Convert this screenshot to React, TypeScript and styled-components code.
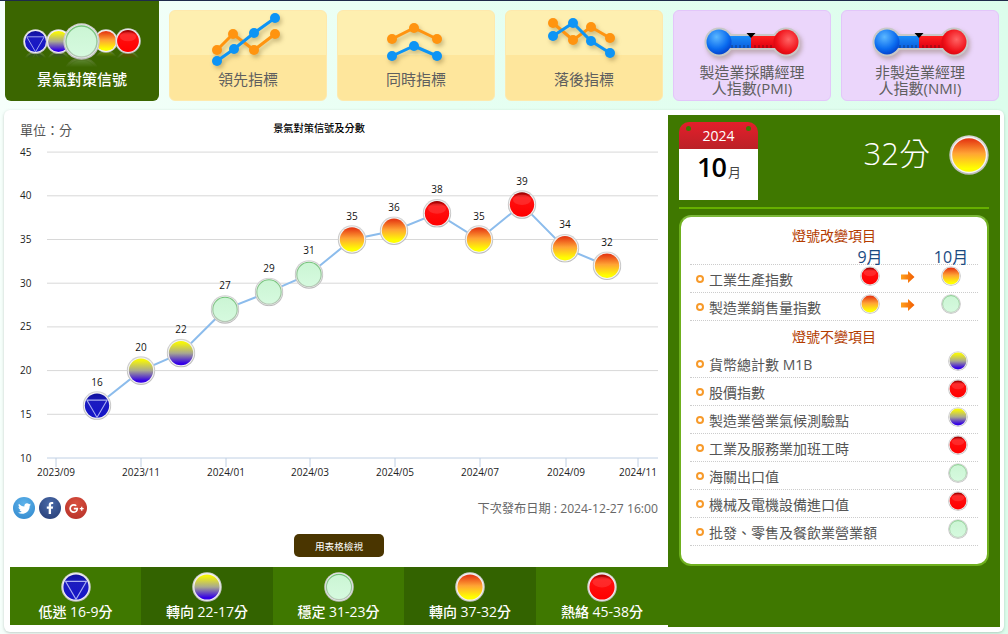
import { useId } from "react";
import styled, { createGlobalStyle } from "styled-components";
import { FaFacebookF, FaGooglePlusG, FaTwitter } from "react-icons/fa";

type LampKind = "low" | "coolTurn" | "stable" | "warmTurn" | "hot";

const FONT = `"Open Sans", "Noto Sans CJK TC", sans-serif`;

const GlobalStyle = createGlobalStyle`
  html, body {
    margin: 0;
    padding: 0;
    height: 100%;
    overflow: hidden;
  }
  body {
    font-family: ${FONT};
    background: linear-gradient(90deg, #f6fffb 0%, #e6fff2 45%, #dcfdec 100%);
  }
`;

const Page = styled.div`
  width: 1008px;
  height: 634px;
  box-sizing: border-box;
  border-top: 1px solid #1e2a4a;
`;

const Nav = styled.nav`
  display: flex;
  align-items: flex-end;
  gap: 10px;
  height: 100px;
  padding-left: 5px;
  margin-bottom: 9px;
`;

const ActiveTab = styled.div`
  width: 154px;
  height: 100px;
  display: flex;
  flex-direction: column;
  align-items: center;
  background: #3b6600;
  border-radius: 0 0 6px 6px;
  color: #fff;
  font-size: 15px;
  font-weight: 500;
  line-height: 18px;
  padding-bottom: 13px;
  box-sizing: border-box;
`;

const LampGroup = styled.div`
  display: flex;
  align-items: center;
  height: 38px;
  margin-top: 21px;
  margin-bottom: auto;
`;

const GroupLamp = styled.span<{ $top?: boolean; $gap: number }>`
  display: flex;
  margin-left: ${({ $gap }) => $gap}px;
  z-index: ${({ $top }) => ($top ? 2 : 1)};
  -webkit-box-reflect: below -3px linear-gradient(transparent 72%, rgba(255, 255, 255, 0.3));
`;

const Tab = styled.div<{ $variant: "amber" | "violet"; $twoLine?: boolean }>`
  width: 158px;
  height: 91px;
  display: flex;
  flex-direction: column;
  align-items: center;
  box-sizing: border-box;
  border-radius: 6px;
  color: #5f5f5f;
  font-size: 15px;
  line-height: 16px;
  text-align: center;
  padding-bottom: ${({ $twoLine }) => ($twoLine ? "4px" : "13px")};
  background: ${({ $variant }) =>
    $variant === "amber"
      ? "linear-gradient(180deg, #feefb0 0, #feefb0 49%, #fee69c 49%, #fee69c 100%)"
      : "#ebd6fb"};
  border: ${({ $variant }) =>
    $variant === "amber" ? "1px solid #fee9ad" : "1px solid #e3c6fa"};
`;

const TabIcon = styled.svg`
  display: block;
  flex: none;
  margin-bottom: auto;
  filter: drop-shadow(2px 3px 2px rgba(90, 70, 20, 0.3));
`;

const Card = styled.main`
  display: flex;
  width: 1000px;
  height: 522px;
  margin-left: 4px;
  box-sizing: border-box;
  padding: 5px 4px 5px 6px;
  background: #fff;
  border-radius: 6px;
  box-shadow: 0 1px 3px rgba(90, 110, 100, 0.35);
`;

const LeftColumn = styled.section`
  width: 658px;
  display: flex;
  flex-direction: column;
`;

const ChartSvg = styled.svg`
  display: block;
  width: 658px;
  height: 375px;
  font-family: ${FONT};
`;

const ToolRow = styled.div`
  display: flex;
  align-items: center;
  justify-content: space-between;
  height: 22px;
  margin-top: 7px;
  padding: 0 10px 0 3px;
`;

const Socials = styled.div`
  display: flex;
  gap: 4px;
`;

const SocialButton = styled.span<{ $color: string; $dark: string; $size: number }>`
  width: 22px;
  height: 22px;
  border-radius: 50%;
  display: flex;
  align-items: center;
  justify-content: center;
  color: #fff;
  font-size: ${({ $size }) => $size}px;
  background: radial-gradient(circle at 50% 30%, ${({ $color }) => $color}, ${({ $dark }) => $dark});
`;

const NextDate = styled.span`
  font-size: 12.2px;
  color: #666;
`;

const TableButton = styled.button`
  align-self: center;
  width: 90px;
  height: 23px;
  margin-top: 15px;
  padding: 0;
  border: 0;
  border-radius: 5px;
  background: #4a3500;
  color: #fff;
  font-family: ${FONT};
  font-size: 9.6px;
`;

const Legend = styled.div`
  display: grid;
  grid-template-columns: 131px 132px 131px 132px 132px;
  height: 58px;
  margin-top: auto;
  margin-bottom: 2px;
`;

const LegendCell = styled.div<{ $dark?: boolean }>`
  display: flex;
  flex-direction: column;
  align-items: center;
  padding-top: 5px;
  box-sizing: border-box;
  background: ${({ $dark }) => ($dark ? "#336300" : "#3f7800")};
  color: #fff;
  font-size: 14px;
  font-weight: 500;
  line-height: 19px;
`;

const Aside = styled.aside`
  width: 332px;
  box-sizing: border-box;
  padding: 7px 11px;
  background: #3f7800;
`;

const AsideHead = styled.div`
  display: flex;
  justify-content: space-between;
  height: 78px;
  margin-bottom: 7px;
`;

const Calendar = styled.div`
  position: relative;
  width: 79px;
  display: flex;
  flex-direction: column;
  text-align: center;
`;

const CalendarTop = styled.div`
  height: 27px;
  border-radius: 10px 10px 0 0;
  background: linear-gradient(180deg, #e41f2b, #bb2127);
  color: #fff;
  font-size: 14px;
  line-height: 27px;
`;

const CalendarHole = styled.i<{ $side: "left" | "right" }>`
  position: absolute;
  top: 4px;
  ${({ $side }) => $side}: 7px;
  width: 5px;
  height: 5px;
  border-radius: 50%;
  background: #3f7800;
`;

const CalendarMonth = styled.div`
  flex: 1;
  background: #fff;
  color: #000;
  font-size: 27px;
  font-weight: 600;
  line-height: 36px;
  letter-spacing: -1px;

  small {
    font-size: 13px;
    font-weight: 400;
    color: #444;
    margin-left: 2px;
  }
`;

const Score = styled.div`
  display: flex;
  align-items: center;
  gap: 19px;
  height: 40px;
  margin-top: 13px;
  color: #fff;
  font-size: 31px;
  font-weight: 300;
`;

const ScoreValue = styled.span`
  margin-bottom: 8px;
`;

const Divider = styled.hr`
  height: 2px;
  margin: 0 0 6px;
  border: 0;
  background: #66b000;
`;

const StatusBox = styled.div`
  height: 351px;
  box-sizing: border-box;
  padding: 9px 9px 0;
  background: #fff;
  border: 2px solid #6fb01e;
  border-top-color: #7cb83a;
  border-radius: 12px;
`;

const BoxTitle = styled.h3<{ $second?: boolean }>`
  margin: ${({ $second }) => ($second ? "6px 0 0" : "0")};
  height: ${({ $second }) => ($second ? "23px" : "20px")};
  color: #b33c00;
  font-size: 14px;
  font-weight: 400;
  line-height: 20px;
  text-align: center;
`;

const ChangeGrid = styled.div`
  display: grid;
  grid-template-columns: 160px 40px 36px 50px 2px;
  align-items: center;
  justify-items: center;
  height: 28px;
  box-sizing: border-box;
  border-bottom: 1px dotted #ccc;
`;

const MonthHead = styled(ChangeGrid)`
  height: 19px;
  padding-top: 2px;
  color: #1a4a82;
  font-size: 16px;
  line-height: 18px;
`;

const SteadyRow = styled.div`
  display: grid;
  grid-template-columns: 248px 40px;
  align-items: center;
  justify-items: center;
  height: 28px;
  box-sizing: border-box;
  border-bottom: 1px dotted #ccc;
`;

const ItemLabel = styled.span`
  justify-self: start;
  display: flex;
  align-items: center;
  gap: 5px;
  padding-left: 6px;
  color: #555;
  font-size: 14px;
  white-space: nowrap;

  &::before {
    content: "";
    width: 4px;
    height: 4px;
    border: 2.5px solid #f79a2a;
    border-radius: 50%;
  }
`;

// lamps in the status rows sit a little above the row's text
const RowLamp = styled.span`
  display: block;
  margin-bottom: 5px;
`;

const ArrowSvg = styled.svg`
  display: block;
  margin-bottom: 3px;
`;

const lampStops: Record<LampKind, [string, string][]> = {
  low: [["0", "#10109a"], ["0.35", "#1c1cc0"], ["1", "#1414c8"]],
  coolTurn: [["0.08", "#f4f40c"], ["0.5", "#a8a890"], ["0.92", "#3400e6"]],
  stable: [["0", "#cbf5d4"], ["1", "#d6fadf"]],
  warmTurn: [["0.05", "#e63c14"], ["0.45", "#ffa334"], ["0.9", "#ffff00"]],
  hot: [["0", "#8e0000"], ["0.22", "#ff1010"], ["1", "#ff0000"]],
};

// one lamp, used as a plain icon or nested inside the chart svg
const Lamp = ({ kind, size, x, y }: { kind: LampKind; size: number; x?: number; y?: number }) => {
  const id = useId().replace(/[^a-zA-Z0-9]/g, "");
  return (
    <svg x={x} y={y} width={size} height={size} viewBox="0 0 40 40" display="block">
      <defs>
        <linearGradient id={`${id}ring`} x1="0" y1="0" x2="0" y2="1">
          <stop offset="0" stopColor="#d4d4d4" />
          <stop offset="1" stopColor="#bcbcbc" />
        </linearGradient>
        <linearGradient id={`${id}edge`} x1="0" y1="0" x2="0" y2="1">
          <stop offset="0" stopColor="#74c47a" />
          <stop offset="1" stopColor="#b8c8b8" />
        </linearGradient>
        <linearGradient id={`${id}fill`} x1="0" y1="0" x2="0" y2="1">
          {lampStops[kind].map(([offset, color]) => (
            <stop key={offset} offset={offset} stopColor={color} />
          ))}
        </linearGradient>
      </defs>
      <circle cx="20" cy="20" r="19.7" fill={`url(#${id}ring)`} />
      <circle cx="20" cy="20" r="18.2" fill="#f4f4f4" />
      <circle
        cx="20"
        cy="20"
        r="16.8"
        fill={`url(#${id}fill)`}
        stroke={kind === "stable" ? `url(#${id}edge)` : "none"}
        strokeWidth="1.6"
      />
      {kind === "low" && (
        <path d="M6 12.5H34L20 36.5Z" fill="none" stroke="#a9aef2" strokeWidth="1.5" />
      )}
      {kind === "hot" && <ellipse cx="20" cy="13.5" rx="12.5" ry="7" fill="#ff6a6a" opacity="0.3" />}
    </svg>
  );
};

type Pt = [number, number];

const Polyline = ({ points, color }: { points: Pt[]; color: string }) => (
  <g>
    <polyline
      points={points.map((p) => p.join(",")).join(" ")}
      fill="none"
      stroke={color}
      strokeWidth="3"
    />
    {points.map(([cx, cy]) => (
      <circle key={`${cx}-${cy}`} cx={cx} cy={cy} r="5" fill={color} />
    ))}
  </g>
);

const LineIcon = ({ orange, blue }: { orange: Pt[]; blue: Pt[] }) => (
  <TabIcon width="80" height="60" viewBox="0 0 80 60">
    <Polyline points={orange} color="#ff9410" />
    <Polyline points={blue} color="#0d94f5" />
  </TabIcon>
);

const Thermometer = () => {
  const id = useId().replace(/[^a-zA-Z0-9]/g, "");
  return (
    <TabIcon width="96" height="53" viewBox="0 0 96 53">
      <defs>
        <linearGradient id={`${id}b`} x1="0" y1="0" x2="0" y2="1">
          <stop offset="0" stopColor="#1a8cf8" />
          <stop offset="1" stopColor="#0a60e0" />
        </linearGradient>
        <linearGradient id={`${id}r`} x1="0" y1="0" x2="0" y2="1">
          <stop offset="0" stopColor="#ff2020" />
          <stop offset="1" stopColor="#e00010" />
        </linearGradient>
        <radialGradient id={`${id}bb`} cx="0.4" cy="0.3" r="0.8">
          <stop offset="0" stopColor="#5cb8ff" />
          <stop offset="0.6" stopColor="#0a6cf0" />
          <stop offset="1" stopColor="#0034c0" />
        </radialGradient>
        <radialGradient id={`${id}rb`} cx="0.6" cy="0.4" r="0.8">
          <stop offset="0" stopColor="#ff6464" />
          <stop offset="0.6" stopColor="#f01018" />
          <stop offset="1" stopColor="#c00008" />
        </radialGradient>
      </defs>
      <circle cx="15" cy="31" r="14.5" fill="#c8c8c8" />
      <circle cx="82" cy="31" r="14.5" fill="#c8c8c8" />
      <rect x="15" y="23" width="67" height="16" fill="#c8c8c8" />
      <rect x="20" y="25" width="27" height="12" fill={`url(#${id}b)`} />
      <rect x="47" y="25" width="30" height="12" fill={`url(#${id}r)`} />
      <circle cx="15" cy="31" r="12.5" fill={`url(#${id}bb)`} />
      <circle cx="82" cy="31" r="12.5" fill={`url(#${id}rb)`} />
      <path
        d="M28 37v-3M32 37v-3M36 37v-3M40 37v-3M44 37v-3M51 37v-3M55 37v-3M59 37v-3M63 37v-3M67 37v-3"
        stroke="#111"
        strokeOpacity="0.65"
        strokeWidth="0.7"
      />
      <path d="M42.5 22H51.5L47 27Z" fill="#000" />
    </TabIcon>
  );
};

const ChangeArrow = () => {
  const id = useId().replace(/[^a-zA-Z0-9]/g, "");
  return (
    <ArrowSvg width="14" height="13" viewBox="0 0 14 13">
      <defs>
        <linearGradient id={id} x1="0" y1="0" x2="1" y2="0">
          <stop offset="0" stopColor="#ffa11e" />
          <stop offset="1" stopColor="#f25c00" />
        </linearGradient>
      </defs>
      <path d="M0 3.5H7V0L13.5 6L7 12V8.5H0Z" fill={`url(#${id})`} />
    </ArrowSvg>
  );
};

const gridLines = [45, 40, 35, 30, 25, 20, 15, 10];
const valueY = (v: number) => 343 - (v - 10) * 8.74;

const xTicks: [string, number][] = [
  ["2023/09", 46],
  ["2023/11", 131],
  ["2024/01", 216],
  ["2024/03", 300],
  ["2024/05", 385],
  ["2024/07", 470],
  ["2024/09", 556],
  ["2024/11", 628],
];

const points: { x: number; v: number; kind: LampKind }[] = [
  { x: 87, v: 16, kind: "low" },
  { x: 131, v: 20, kind: "coolTurn" },
  { x: 171, v: 22, kind: "coolTurn" },
  { x: 215, v: 27, kind: "stable" },
  { x: 259, v: 29, kind: "stable" },
  { x: 299, v: 31, kind: "stable" },
  { x: 342, v: 35, kind: "warmTurn" },
  { x: 384, v: 36, kind: "warmTurn" },
  { x: 427, v: 38, kind: "hot" },
  { x: 469, v: 35, kind: "warmTurn" },
  { x: 512, v: 39, kind: "hot" },
  { x: 555, v: 34, kind: "warmTurn" },
  { x: 597, v: 32, kind: "warmTurn" },
];

const ScoreChart = () => (
  <ChartSvg viewBox="0 0 658 375">
    <text x="10" y="20" fontSize="13" fill="#555">單位：分</text>
    <text x="309" y="17" fontSize="10.2" fill="#000" textAnchor="middle" fontWeight="500">
      景氣對策信號及分數
    </text>
    {gridLines.map((v) => (
      <g key={v}>
        <line x1="37" x2="648" y1={valueY(v)} y2={valueY(v)} stroke={v === 10 ? "#c0d0e4" : "#d8d8d8"} />
        <text x="10" y={valueY(v) + 3.5} fontSize="10" fill="#222">{v}</text>
      </g>
    ))}
    {xTicks.map(([label, x]) => (
      <g key={label}>
        <line x1={x} x2={x} y1="343" y2="352" stroke="#c0d0e4" />
        <text x={x} y="361" fontSize="10" fill="#222" textAnchor="middle">{label}</text>
      </g>
    ))}
    <polyline
      points={points.map((p) => `${p.x},${valueY(p.v)}`).join(" ")}
      fill="none"
      stroke="#8cbcec"
      strokeWidth="2"
    />
    {points.map((p) => (
      <g key={p.x}>
        <Lamp kind={p.kind} size={29} x={p.x - 14.5} y={valueY(p.v) - 14.5} />
        <text x={p.x} y={valueY(p.v) - 20} fontSize="10" fill="#111" textAnchor="middle">{p.v}</text>
      </g>
    ))}
  </ChartSvg>
);

const legend: { kind: LampKind; label: string; dark?: boolean }[] = [
  { kind: "low", label: "低迷 16-9分" },
  { kind: "coolTurn", label: "轉向 22-17分", dark: true },
  { kind: "stable", label: "穩定 31-23分" },
  { kind: "warmTurn", label: "轉向 37-32分", dark: true },
  { kind: "hot", label: "熱絡 45-38分" },
];

const changed: { label: string; from: LampKind; to: LampKind }[] = [
  { label: "工業生產指數", from: "hot", to: "warmTurn" },
  { label: "製造業銷售量指數", from: "warmTurn", to: "stable" },
];

const steady: { label: string; kind: LampKind }[] = [
  { label: "貨幣總計數 M1B", kind: "coolTurn" },
  { label: "股價指數", kind: "hot" },
  { label: "製造業營業氣候測驗點", kind: "coolTurn" },
  { label: "工業及服務業加班工時", kind: "hot" },
  { label: "海關出口值", kind: "stable" },
  { label: "機械及電機設備進口值", kind: "hot" },
  { label: "批發、零售及餐飲業營業額", kind: "stable" },
];

const App = () => {
  return (
    <Page>
      <GlobalStyle />
      <Nav>
        <ActiveTab>
          <LampGroup>
            <GroupLamp $gap={0}><Lamp kind="low" size={25} /></GroupLamp>
            <GroupLamp $gap={-2}><Lamp kind="coolTurn" size={25} /></GroupLamp>
            <GroupLamp $gap={-8} $top><Lamp kind="stable" size={37} /></GroupLamp>
            <GroupLamp $gap={-6}><Lamp kind="warmTurn" size={24} /></GroupLamp>
            <GroupLamp $gap={-3}><Lamp kind="hot" size={26} /></GroupLamp>
          </LampGroup>
          景氣對策信號
        </ActiveTab>
        <Tab $variant="amber">
          <LineIcon
            orange={[[9, 39], [25, 23], [46, 39], [67, 23]]}
            blue={[[9, 50], [26, 38], [46, 22], [67, 7]]}
          />
          領先指標
        </Tab>
        <Tab $variant="amber">
          <LineIcon
            orange={[[16, 28], [38, 17], [61, 28]]}
            blue={[[16, 45], [38, 35], [61, 45]]}
          />
          同時指標
        </Tab>
        <Tab $variant="amber">
          <LineIcon
            orange={[[9, 12], [29, 29], [47, 16], [66, 27]]}
            blue={[[9, 25], [29, 12], [47, 30], [66, 42]]}
          />
          落後指標
        </Tab>
        <Tab $variant="violet" $twoLine>
          <Thermometer />
          製造業採購經理
          <br />
          人指數(PMI)
        </Tab>
        <Tab $variant="violet" $twoLine>
          <Thermometer />
          非製造業經理
          <br />
          人指數(NMI)
        </Tab>
      </Nav>
      <Card>
        <LeftColumn>
          <ScoreChart />
          <ToolRow>
            <Socials>
              <SocialButton $color="#5db2ea" $dark="#2f86cc" $size={13}><FaTwitter /></SocialButton>
              <SocialButton $color="#4a6aa8" $dark="#243a72" $size={12}><FaFacebookF /></SocialButton>
              <SocialButton $color="#d9503f" $dark="#b32e26" $size={15}><FaGooglePlusG /></SocialButton>
            </Socials>
            <NextDate>下次發布日期 : 2024-12-27 16:00</NextDate>
          </ToolRow>
          <TableButton type="button">用表格檢視</TableButton>
          <Legend>
            {legend.map((item) => (
              <LegendCell key={item.label} $dark={item.dark}>
                <Lamp kind={item.kind} size={30} />
                {item.label}
              </LegendCell>
            ))}
          </Legend>
        </LeftColumn>
        <Aside>
          <AsideHead>
            <Calendar>
              <CalendarHole $side="left" />
              <CalendarHole $side="right" />
              <CalendarTop>2024</CalendarTop>
              <CalendarMonth>
                10<small>月</small>
              </CalendarMonth>
            </Calendar>
            <Score>
              <ScoreValue>32分</ScoreValue>
              <Lamp kind="warmTurn" size={40} />
            </Score>
          </AsideHead>
          <Divider />
          <StatusBox>
            <BoxTitle>燈號改變項目</BoxTitle>
            <MonthHead>
              <span />
              <span>9月</span>
              <span />
              <span>10月</span>
            </MonthHead>
            {changed.map((item) => (
              <ChangeGrid key={item.label}>
                <ItemLabel>{item.label}</ItemLabel>
                <RowLamp><Lamp kind={item.from} size={20} /></RowLamp>
                <ChangeArrow />
                <RowLamp><Lamp kind={item.to} size={20} /></RowLamp>
              </ChangeGrid>
            ))}
            <BoxTitle $second>燈號不變項目</BoxTitle>
            {steady.map((item) => (
              <SteadyRow key={item.label}>
                <ItemLabel>{item.label}</ItemLabel>
                <RowLamp><Lamp kind={item.kind} size={20} /></RowLamp>
              </SteadyRow>
            ))}
          </StatusBox>
        </Aside>
      </Card>
    </Page>
  );
};

export default App;
